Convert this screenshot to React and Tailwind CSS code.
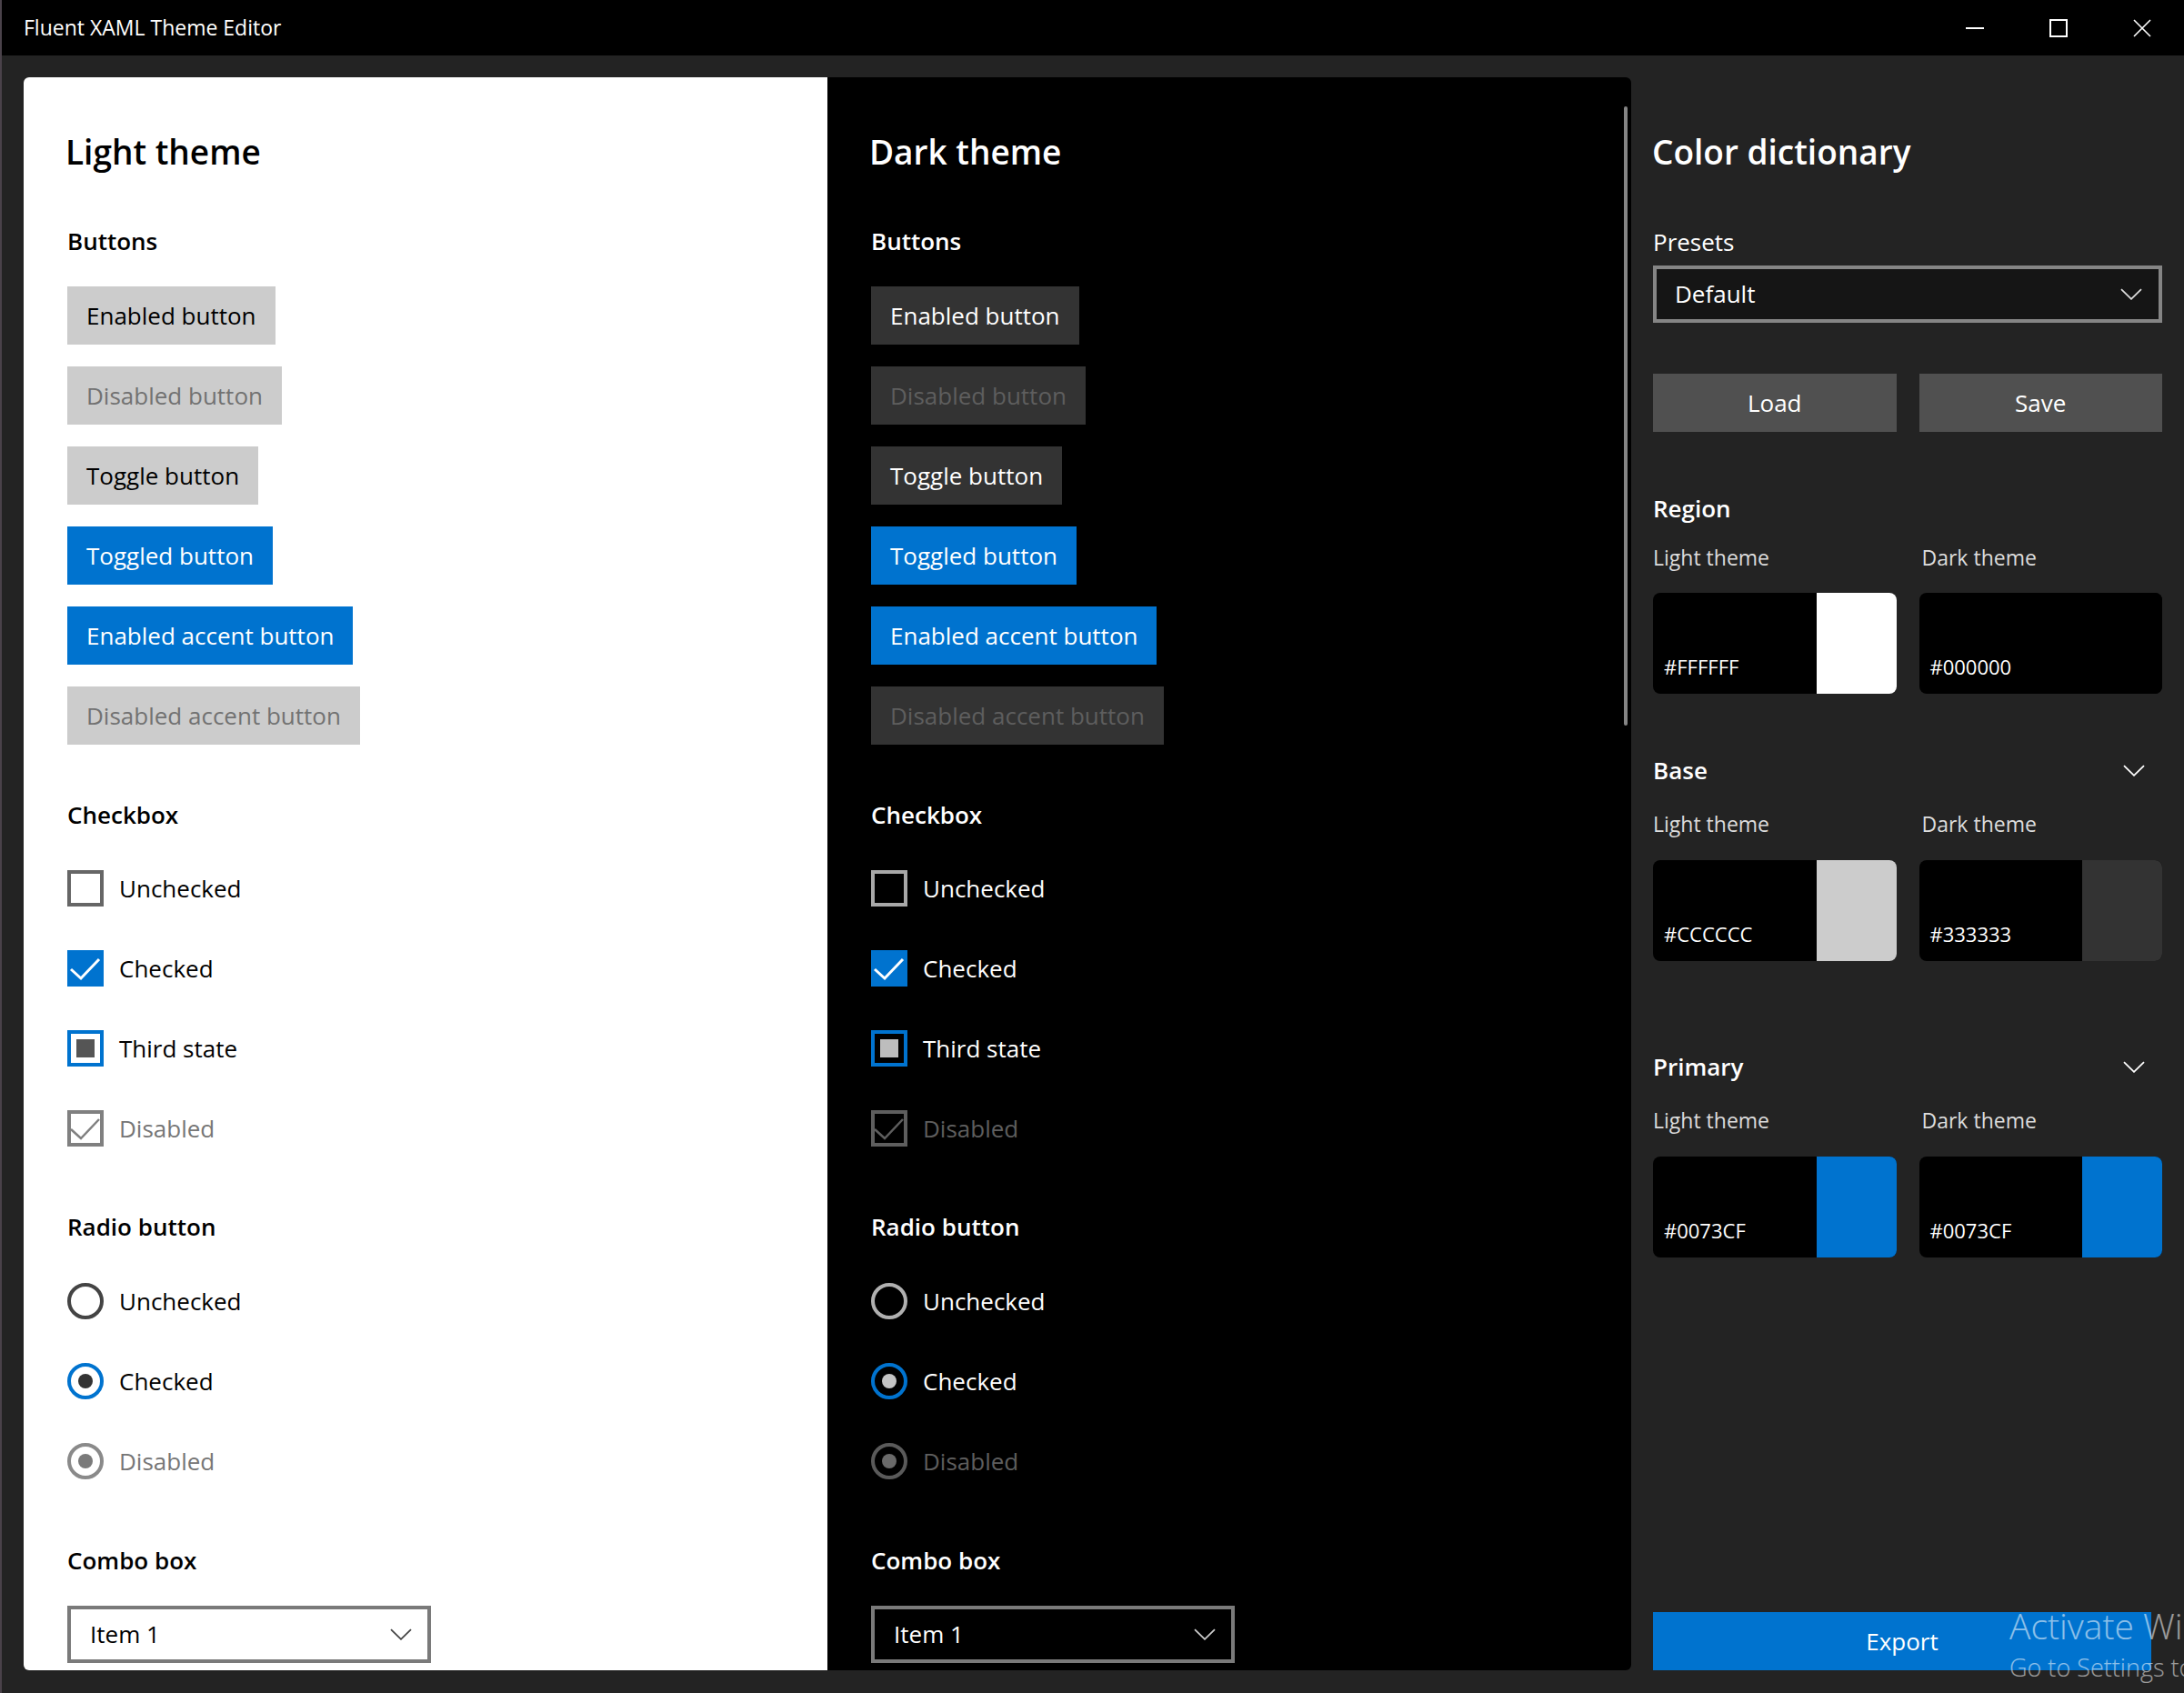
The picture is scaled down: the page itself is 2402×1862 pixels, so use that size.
import React from 'react';

const ACCENT = '#0073CF';
const CHECK = 'M4 21 L15 31 L35 10';

function Chevron({ color, className = '' }) {
  return (
    <svg width="24" height="13" viewBox="0 0 24 13" fill="none" className={className}>
      <path d="M1 1.2 L12 11.8 L23 1.2" stroke={color} strokeWidth="1.8" />
    </svg>
  );
}

function CheckGlyph({ state, dark }) {
  const border = dark ? '#a8a8a8' : '#666666';
  const dis = dark ? '#5e5e5e' : '#808080';
  const mid = dark ? '#bdbdbd' : '#555555';
  if (state === 'checked') {
    return (
      <svg width="40" height="40" viewBox="0 0 40 40">
        <rect width="40" height="40" fill={ACCENT} />
        <path d={CHECK} stroke="#ffffff" strokeWidth="3" fill="none" />
      </svg>
    );
  }
  if (state === 'third') {
    return (
      <svg width="40" height="40" viewBox="0 0 40 40">
        <rect x="2" y="2" width="36" height="36" stroke={ACCENT} strokeWidth="4" fill="none" />
        <rect x="10" y="10" width="20" height="20" fill={mid} />
      </svg>
    );
  }
  if (state === 'disabled') {
    return (
      <svg width="40" height="40" viewBox="0 0 40 40">
        <rect x="2" y="2" width="36" height="36" stroke={dis} strokeWidth="4" fill="none" />
        <path d={CHECK} stroke={dis} strokeWidth="2.5" fill="none" />
      </svg>
    );
  }
  return (
    <svg width="40" height="40" viewBox="0 0 40 40">
      <rect x="2" y="2" width="36" height="36" stroke={border} strokeWidth="4" fill="none" />
    </svg>
  );
}

function RadioGlyph({ state, dark }) {
  const ring = dark ? '#b0b0b0' : '#444444';
  if (state === 'checked') {
    return (
      <svg width="40" height="40" viewBox="0 0 40 40">
        <circle cx="20" cy="20" r="18" stroke={ACCENT} strokeWidth="4" fill="none" />
        <circle cx="20" cy="20" r="8" fill={dark ? '#c4c4c4' : '#333333'} />
      </svg>
    );
  }
  if (state === 'disabled') {
    return (
      <svg width="40" height="40" viewBox="0 0 40 40">
        <circle cx="20" cy="20" r="18" stroke={dark ? '#5a5a5a' : '#8a8a8a'} strokeWidth="4" fill="none" />
        <circle cx="20" cy="20" r="8" fill={dark ? '#6a6a6a' : '#7a7a7a'} />
      </svg>
    );
  }
  return (
    <svg width="40" height="40" viewBox="0 0 40 40">
      <circle cx="20" cy="20" r="18" stroke={ring} strokeWidth="4" fill="none" />
    </svg>
  );
}

function ThemePanel({ dark }) {
  const text = dark ? 'text-white' : 'text-black';
  const muted = dark ? 'text-[#5e5e5e]' : 'text-[#767676]';
  const btn = dark ? 'bg-[#333333] text-white' : 'bg-[#cccccc] text-black';
  const btnDis = dark ? 'bg-[#333333] text-[#5e5e5e]' : 'bg-[#cccccc] text-[#727272]';
  const accent = 'bg-[#0073CF] text-white';
  const header = `text-[26px] leading-[34px] font-semibold ${text}`;

  const buttons = [
    ['Enabled button', btn],
    ['Disabled button', btnDis],
    ['Toggle button', btn],
    ['Toggled button', accent],
    ['Enabled accent button', accent],
    ['Disabled accent button', btnDis],
  ];
  const checks = [
    ['Unchecked', 'unchecked'],
    ['Checked', 'checked'],
    ['Third state', 'third'],
    ['Disabled', 'disabled'],
  ];
  const radios = [
    ['Unchecked', 'unchecked'],
    ['Checked', 'checked'],
    ['Disabled', 'disabled'],
  ];

  return (
    <div
      className={
        dark
          ? 'relative w-[884px] shrink-0 bg-black rounded-tr-[6px] rounded-br-[6px] pl-[48px] pt-[56px]'
          : 'relative w-[884px] shrink-0 bg-white rounded-tl-[6px] rounded-bl-[6px] pl-[48px] pt-[56px]'
      }
    >
      <h1 className={`-ml-[2px] text-[37px] leading-[52px] font-semibold ${text}`}>
        {dark ? 'Dark theme' : 'Light theme'}
      </h1>

      <div className={`mt-[55px] ${header}`}>Buttons</div>
      <div className="mt-[33px] flex flex-col items-start gap-[24px]">
        {buttons.map(([label, cls]) => (
          <div key={label} className={`h-[64px] px-[21px] flex items-center text-[26px] ${cls}`}>
            {label}
          </div>
        ))}
      </div>

      <div className={`mt-[60px] ${header}`}>Checkbox</div>
      <div className="mt-[44px] flex flex-col gap-[48px]">
        {checks.map(([label, state]) => (
          <div key={label} className="h-[40px] flex items-center gap-[17px]">
            <CheckGlyph state={state} dark={dark} />
            <span className={`text-[26px] ${state === 'disabled' ? muted : text}`}>{label}</span>
          </div>
        ))}
      </div>

      <div className={`mt-[71px] ${header}`}>Radio button</div>
      <div className="mt-[45px] flex flex-col gap-[48px]">
        {radios.map(([label, state]) => (
          <div key={label} className="h-[40px] flex items-center gap-[17px]">
            <RadioGlyph state={state} dark={dark} />
            <span className={`text-[26px] ${state === 'disabled' ? muted : text}`}>{label}</span>
          </div>
        ))}
      </div>

      <div className={`mt-[72px] ${header}`}>Combo box</div>
      <div
        className={
          dark
            ? 'mt-[33px] w-[400px] h-[63px] border-[4px] border-[#7a7a7a] bg-black flex items-center justify-between pl-[21px] pr-[17px]'
            : 'mt-[33px] w-[400px] h-[63px] border-[4px] border-[#7a7a7a] bg-white flex items-center justify-between pl-[21px] pr-[17px]'
        }
      >
        <span className={`text-[26px] ${text}`}>Item 1</span>
        <Chevron color={dark ? '#cccccc' : '#444444'} />
      </div>

      {dark && (
        <div className="absolute right-[4px] top-[32px] w-[4px] h-[681px] rounded-full bg-[#858585]" />
      )}
    </div>
  );
}

function Swatch({ hex, swatch }) {
  return (
    <div className="h-[111px] rounded-[8px] bg-black overflow-hidden flex">
      <div className="flex-1 flex items-end pl-[12px] pb-[15px] text-white text-[22px] leading-[30px]">
        {hex}
      </div>
      <div className={`w-[88px] ${swatch}`} />
    </div>
  );
}

function ColorGroup({ title, expander, mt, light, dark }) {
  return (
    <div className={mt}>
      <div className="h-[34px] flex items-center justify-between">
        <span className="text-[26px] font-semibold text-white">{title}</span>
        {expander && <Chevron color="#ffffff" className="mr-[19px]" />}
      </div>
      <div className={`grid grid-cols-2 gap-x-[25px] ${expander ? 'mt-[26px]' : 'mt-[21px]'}`}>
        <div className="text-[23px] leading-[32px] text-[#dcdcdc]">Light theme</div>
        <div className="text-[23px] leading-[32px] text-[#dcdcdc] pl-[3px]">Dark theme</div>
      </div>
      <div className={`grid grid-cols-2 gap-x-[25px] ${expander ? 'mt-[24px]' : 'mt-[23px]'}`}>
        <Swatch hex={light[0]} swatch={light[1]} />
        <Swatch hex={dark[0]} swatch={dark[1]} />
      </div>
    </div>
  );
}

function ColorDictionary() {
  return (
    <div className="flex-1 flex flex-col px-[24px] pt-[56px]">
      <h1 className="-ml-[1px] text-[37px] leading-[52px] font-semibold text-white">Color dictionary</h1>
      <div className="mt-[55px] text-[26px] leading-[36px] text-white">Presets</div>
      <div className="mt-[8px] h-[63px] border-[4px] border-[#858585] bg-[#151515] flex items-center justify-between pl-[20px] pr-[18px]">
        <span className="text-[26px] text-white">Default</span>
        <Chevron color="#dddddd" />
      </div>
      <div className="mt-[56px] grid grid-cols-2 gap-x-[25px]">
        <div className="h-[64px] bg-[#505050] flex items-center justify-center text-[26px] text-white">Load</div>
        <div className="h-[64px] bg-[#505050] flex items-center justify-center text-[26px] text-white">Save</div>
      </div>

      <ColorGroup
        title="Region"
        mt="mt-[67px]"
        light={['#FFFFFF', 'bg-[#ffffff]']}
        dark={['#000000', 'bg-[#000000]']}
      />
      <ColorGroup
        title="Base"
        expander
        mt="mt-[67px]"
        light={['#CCCCCC', 'bg-[#cccccc]']}
        dark={['#333333', 'bg-[#333333]']}
      />
      <ColorGroup
        title="Primary"
        expander
        mt="mt-[99px]"
        light={['#0073CF', 'bg-[#0073CF]']}
        dark={['#0073CF', 'bg-[#0073CF]']}
      />

      <div className="mt-auto w-[548px] h-[64px] bg-[#0073CF] flex items-center justify-center text-[26px] text-white">
        Export
      </div>
    </div>
  );
}

function TitleBar() {
  return (
    <div className="h-[61px] shrink-0 bg-black flex items-center">
      <span className="pl-[24px] text-[23px] text-white">Fluent XAML Theme Editor</span>
      <div className="ml-auto flex h-full">
        <div className="w-[92px] h-full flex items-center justify-center">
          <div className="w-[20px] h-[2px] bg-white" />
        </div>
        <div className="w-[92px] h-full flex items-center justify-center">
          <div className="w-[20px] h-[20px] border-[2px] border-white" />
        </div>
        <div className="w-[92px] h-full flex items-center justify-center">
          <svg width="20" height="20" viewBox="0 0 20 20">
            <path d="M1 1 L19 19 M19 1 L1 19" stroke="#ffffff" strokeWidth="1.6" />
          </svg>
        </div>
      </div>
    </div>
  );
}

export default function App() {
  return (
    <div className="relative w-[2402px] h-[1862px] overflow-hidden flex flex-col bg-[#232323] border-l-[2px] border-[#4a424a] font-['Open_Sans','Noto_Sans',sans-serif]">
      <TitleBar />
      <div className="flex-1 flex pl-[24px] pt-[24px] pb-[25px]">
        <ThemePanel />
        <ThemePanel dark />
        <ColorDictionary />
      </div>

      {/* OS activation watermark sitting over the window, clipped by the screen edge */}
      <div className="absolute left-[2208px] top-[1763px] whitespace-nowrap font-light text-[#ffffff]/55 pointer-events-none">
        <div className="text-[39px] leading-[50px]">Activate Windows</div>
        <div className="mt-[3px] text-[27px] leading-[36px]">Go to Settings to activate Windows.</div>
      </div>
    </div>
  );
}
